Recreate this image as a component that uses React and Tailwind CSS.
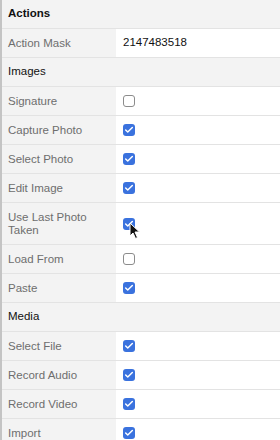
import { Check } from "lucide-react";

const sections = [
  { title: "Actions", bold: true, rows: [{ label: "Action Mask", text: "2147483518" }] },
  {
    title: "Images",
    rows: [
      { label: "Signature", checked: false },
      { label: "Capture Photo", checked: true },
      { label: "Select Photo", checked: true },
      { label: "Edit Image", checked: true },
      { label: "Use Last Photo Taken", checked: true, tall: true, cursor: true },
      { label: "Load From", checked: false },
      { label: "Paste", checked: true },
    ],
  },
  {
    title: "Media",
    rows: [
      { label: "Select File", checked: true },
      { label: "Record Audio", checked: true },
      { label: "Record Video", checked: true },
      { label: "Import", checked: true },
    ],
  },
];

function Box({ checked }) {
  if (checked)
    return (
      <span className="flex h-[12px] w-[12px] items-center justify-center rounded-[3px] bg-[#3a72de]">
        <Check size={10} strokeWidth={3.5} className="text-white" />
      </span>
    );
  return <span className="block h-[12px] w-[12px] rounded-[3px] border border-[#8c8c8c] bg-white" />;
}

function Cursor() {
  return (
    <svg
      className="absolute left-[6px] top-[4px]"
      width="12"
      height="18"
      viewBox="0 0 12 18"
    >
      <path d="M1 1 L1 14 L4 11 L6.5 16.5 L8.5 15.5 L6 10 L10.5 10 Z" fill="#111" stroke="#fff" strokeWidth="1" />
    </svg>
  );
}

function Row({ row }) {
  return (
    <div className={`flex ${row.tall ? "h-[42px]" : "h-[29px]"} border-b border-[#e3e3e3]`}>
      <div className="flex w-[114px] shrink-0 items-center bg-[#f3f3f3] pl-[6px] pr-2 leading-[13px] text-[#6e6e6e]">
        {row.label}
      </div>
      <div className="flex flex-1 items-center bg-white pl-[7px] text-[#111]">
        {row.text ? (
          row.text
        ) : (
          <span className="relative">
            <Box checked={row.checked} />
            {row.cursor && <Cursor />}
          </span>
        )}
      </div>
    </div>
  );
}

export default function App() {
  return (
    <div
      className="h-[440px] w-[280px] overflow-hidden border-l-2 border-[#c4c4c4] bg-white text-[11.5px]"
      style={{ fontFamily: '"Liberation Sans", Arial, sans-serif' }}
    >
      {sections.map((s) => (
        <div key={s.title}>
          <div
            className={`flex h-[29px] items-center border-b border-[#e3e3e3] bg-[#f3f3f3] pl-[6px] text-[#111] ${
              s.bold ? "font-bold" : ""
            }`}
          >
            {s.title}
          </div>
          {s.rows.map((r) => (
            <Row key={r.label} row={r} />
          ))}
        </div>
      ))}
    </div>
  );
}
